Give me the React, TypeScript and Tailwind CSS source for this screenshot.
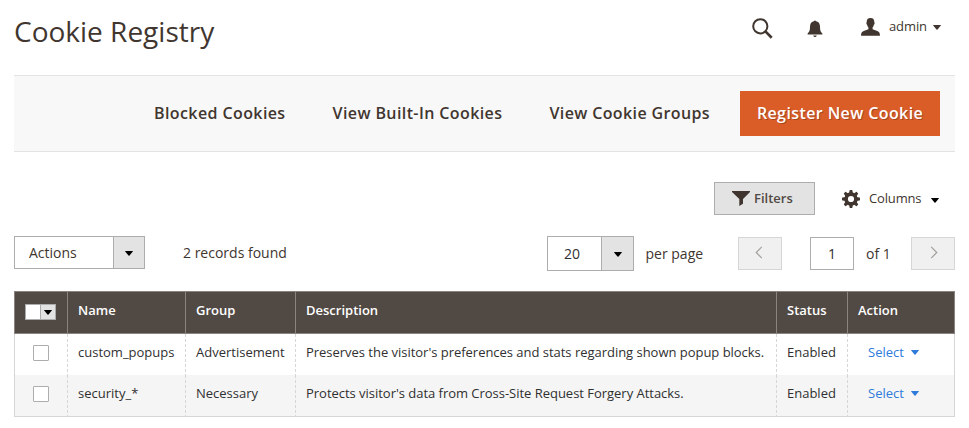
import React from 'react';

function Caret({ className = '' }: { className?: string }) {
  return (
    <svg className={`shrink-0 ${className}`} viewBox="0 0 8 5" fill="currentColor" preserveAspectRatio="none">
      <path d="M0.4 0H7.6Q8.2 0 7.8 0.6L4.5 4.6Q4 5.1 3.5 4.6L0.2 0.6Q-.2 0 .4 0Z" />
    </svg>
  );
}

function GearIcon() {
  return (
    <svg className="h-[18px] w-[18px] shrink-0" viewBox="0 0 18 18" fill="#41362f">
      {[0, 45, 90, 135, 180, 225, 270, 315].map((angle) => (
        <path key={angle} d="M7 4 7.6 0.5Q7.7 0 8.2 0H9.8Q10.3 0 10.4 .5L11 4Z" transform={`rotate(${angle} 9 9)`} />
      ))}
      <path fillRule="evenodd" d="M9 2.3a6.7 6.7 0 1 0 0 13.4A6.7 6.7 0 0 0 9 2.3ZM9 5.9a3.1 3.1 0 1 1 0 6.2A3.1 3.1 0 0 1 9 5.9Z" />
    </svg>
  );
}

function Chevron({ next = false }: { next?: boolean }) {
  return (
    <svg className="mb-0.5 h-[13px] w-2" viewBox="0 0 8 14" fill="none" stroke="#a3a09d" strokeWidth="1.3">
      <path d={next ? 'M1 1 7 7 1 13' : 'M7 1 1 7 7 13'} />
    </svg>
  );
}

function Checkbox() {
  return <span className="block h-4 w-4 rounded-[1px] border border-[#adadad] bg-white" />;
}

const columns = 'grid grid-cols-[52px_118px_110px_481px_71px_107px]';

const rows = [
  { name: 'custom_popups', group: 'Advertisement', description: "Preserves the visitor's preferences and stats regarding shown popup blocks.", bg: 'bg-white' },
  { name: 'security_*', group: 'Necessary', description: "Protects visitor's data from Cross-Site Request Forgery Attacks.", bg: 'bg-[#f5f5f5]' },
];

const cell =
  'flex items-start whitespace-nowrap bg-[repeating-linear-gradient(to_bottom,#d6d6d6_0,#d6d6d6_3px,transparent_3px,transparent_5px)] bg-[length:1px_100%] bg-no-repeat pl-[11px] pt-[9px] leading-[18px]';
const headCell = 'border-l border-[#8a837f] pl-2.5 pt-[9px] leading-[18px]';

export default function App() {
  return (
    <main className="h-[428px] w-[969px] overflow-hidden bg-white px-3.5 font-['Open_Sans',sans-serif] text-sm text-[#41362f]">
      <header className="flex h-[75px] items-start justify-between">
        <h1 className="pt-[11px] text-[28px] leading-10">Cookie Registry</h1>
        <div className="flex h-[54px] items-center pr-3.5">
          <svg className="mr-[34px] mt-0.5 h-[21px] w-[21px]" viewBox="0 0 21 21" fill="none" stroke="#41362f">
            <circle cx="8.3" cy="8.3" r="7.1" strokeWidth="2" />
            <path d="m13.4 13.4 6.3 6.3" strokeWidth="2.7" />
          </svg>
          <svg className="mr-[38px] mt-[3px] h-[17px] w-4" viewBox="0 0 16 17" fill="#41362f">
            <path d="M6.8 1.2Q8-.4 9.2 1.2C12.2 2 12.9 4 13 6.8C13 10.8 13.8 12 15.4 13.5V14.4H.6V13.5C2.2 12 3 10.8 3 6.8C3.1 4 3.8 2 6.8 1.2ZM6.2 15.5H9.8Q9.4 17 8 17T6.2 15.5Z" />
          </svg>
          <svg className="mr-[9px] h-[18px] w-[19px]" viewBox="0 0 19 18" fill="#41362f">
            <path d="M9.5 0C12.2 0 13.4 1.6 13.3 4.2C14 4.7 13.6 6.4 12.9 6.8C12.6 8.2 12 9 11.6 9.5V11.2L16.3 13C18.3 13.8 18.8 14.7 19 17.7H0C.2 14.7.7 13.8 2.7 13L7.4 11.2V9.5C7 9 6.4 8.2 6.1 6.8C5.4 6.4 5 4.7 5.7 4.2C5.6 1.6 6.8 0 9.5 0Z" />
          </svg>
          <span className="mb-0.5 w-11 text-[13px] leading-[18px] tracking-[-0.1px]">admin</span>
          <Caret className="h-[5px] w-2" />
        </div>
      </header>

      <nav className="flex h-[77px] items-center justify-end border-y border-[#e3e3e3] bg-[#f8f8f8] pr-[15px] text-base font-semibold tracking-[0.4px]">
        <button className="mr-[47px] pb-0.5">Blocked Cookies</button>
        <button className="mr-[47px] pb-0.5">View Built-In Cookies</button>
        <button className="mr-[30px] pb-0.5 tracking-[0.38px]">View Cookie Groups</button>
        <button className="h-[45px] w-[200px] bg-[#da5d28] pb-0.5 text-white [text-shadow:1px_1px_0_rgba(0,0,0,0.25)]">Register New Cookie</button>
      </nav>

      <section className="flex justify-end pt-[30px] text-[13px]">
        <button className="mr-[27px] flex h-[33px] w-[101px] items-center border border-[#adadad] bg-[#e3e3e3] pl-[17px] font-semibold text-[#514943]">
          <svg className="mr-1 h-[15px] w-[18px]" viewBox="0 0 18 15" fill="#41362f">
            <path d="M0 0H18V1L11 8V12.8L7.3 15V8L0 1Z" />
          </svg>
          Filters
        </button>
        <button className="flex h-[33px] items-center pr-4">
          <GearIcon />
          <span className="ml-[9px] w-[62px] text-left tracking-[-0.15px]">Columns</span>
          <Caret className="mt-[3px] h-[5px] w-2 text-black" />
        </button>
      </section>

      <section className="flex items-start pt-[21px]">
        <button className="flex h-[33px] w-[131px] border border-[#adadad] bg-white">
          <span className="flex h-full w-[98px] items-center pl-3.5">Actions</span>
          <span className="flex h-full flex-1 items-center justify-center border-l border-[#adadad] bg-[#e3e3e3] text-black">
            <Caret className="mt-0.5 h-[5px] w-2" />
          </span>
        </button>
        <span className="ml-[38px] leading-[33px]">2 records found</span>
        <div className="ml-auto flex items-start">
          <button className="flex h-[35px] w-[87px] border border-[#adadad] bg-white text-[#303030]">
            <span className="flex h-full w-[53px] items-center pl-4">20</span>
            <span className="flex h-full flex-1 items-center justify-center border-l border-[#adadad] bg-[#e3e3e3] text-black">
              <Caret className="mt-0.5 h-[5px] w-2" />
            </span>
          </button>
          <span className="w-[104px] pl-[11.5px] leading-9">per page</span>
          <button className="mt-px flex h-[33px] w-11 items-center justify-center border border-[#d6d6d6] bg-[#f0f0f0] pr-[3px]"><Chevron /></button>
          <span className="ml-7 mt-px flex h-[33px] w-11 items-center justify-center border border-[#adadad] text-[#303030]">1</span>
          <span className="w-[57px] pl-3 leading-9">of 1</span>
          <button className="mt-px flex h-[33px] w-11 items-center justify-center border border-[#d6d6d6] bg-[#f0f0f0] pl-0.5"><Chevron next /></button>
        </div>
      </section>

      <section className="mt-[19px] w-[941px] pt-px text-[13px] text-[#303030] -mb-px">
        <div className={`${columns} -mt-px h-[43px] border border-[#8a837f] bg-[#514943] font-semibold text-white`}>
          <div className="pl-2.5 pt-3">
            <span className="flex h-4 w-[31px] border border-[#adadad] bg-white">
              <span className="ml-auto flex w-[15px] items-center justify-center border-l border-[#adadad] bg-[#e3e3e3] text-black">
                <Caret className="h-[5px] w-2" />
              </span>
            </span>
          </div>
          <div className={headCell}>Name</div>
          <div className={headCell}>Group</div>
          <div className={headCell}>Description</div>
          <div className={headCell}>Status</div>
          <div className={headCell}>Action</div>
        </div>
        <div className="border-x border-b border-[#d6d6d6]">
          {rows.map((row) => (
            <div key={row.name} className={`${columns} h-[41px] ${row.bg}`}>
              <div className="pl-[18px] pt-[11px]"><Checkbox /></div>
              <div className={cell}>{row.name}</div>
              <div className={cell}>{row.group}</div>
              <div className={`${cell} tracking-[-0.025px]`}>{row.description}</div>
              <div className={cell}>Enabled</div>
              <div className={cell}>
                <button className="ml-2.5 flex text-[#2d7bdb]">
                  <span className="w-[43px] text-left">Select</span>
                  <Caret className="mt-[7px] h-[5px] w-2" />
                </button>
              </div>
            </div>
          ))}
        </div>
      </section>
    </main>
  );
}
